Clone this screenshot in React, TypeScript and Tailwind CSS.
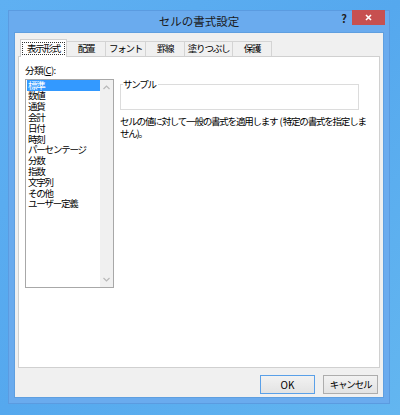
import React from 'react';

const font = { fontFamily: '"Noto Sans CJK JP", "Noto Sans", sans-serif' };

const categories = [
  '標準',
  '数値',
  '通貨',
  '会計',
  '日付',
  '時刻',
  'パーセンテージ',
  '分数',
  '指数',
  '文字列',
  'その他',
  'ユーザー定義',
];

const tabs = ['配置', 'フォント', '罫線', '塗りつぶし', '保護'];
const tabWidths = ['w-[39px]', 'w-[40px]', 'w-[39px]', 'w-[48px]', 'w-[39px]'];

function Chevron({ up }: { up?: boolean }) {
  return (
    <svg width="7" height="5" viewBox="0 0 7 5" className="text-[#b9b9b9]">
      <path
        d={up ? 'M0.5 4 L3.5 1 L6.5 4' : 'M0.5 1 L3.5 4 L6.5 1'}
        fill="none"
        stroke="currentColor"
        strokeWidth="1.2"
      />
    </svg>
  );
}

export default function App() {
  return (
    <div
      className="relative h-[415px] w-[400px] overflow-hidden bg-gradient-to-br from-[#5fb0f2] via-[#55a8ee] to-[#63b6f0]"
      style={font}
    >
      {/* Window */}
      <div className="absolute left-[8px] top-[10px] flex h-[394px] w-[382px] flex-col border border-[#5b9be0] bg-[#6aabee] px-[5px] pb-[5px]">
        {/* Title bar */}
        <div className="relative flex h-[21px] items-center justify-center">
          <span className="text-[11.5px] leading-none text-[#1a1a1a]">セルの書式設定</span>
          <span className="absolute right-[37px] top-[2px] text-[11px] font-bold leading-none text-[#222]">?</span>
          <div className="absolute right-[-1px] top-[-1px] flex h-[15px] w-[33px] items-center justify-center bg-[#c75050]">
            <svg width="7" height="7" viewBox="0 0 7 7">
              <path d="M1 1 L6 6 M6 1 L1 6" stroke="#fff" strokeWidth="1.6" />
            </svg>
          </div>
        </div>

        {/* Client area */}
        <div className="flex flex-1 flex-col border border-[#5f9fe0] bg-[#f0f0f0] px-[3px] pt-[5px]">
          {/* Tabs */}
          <div className="flex h-[18px] items-end pl-[2px]">
            <div className="relative z-10 -mb-px flex h-[18px] w-[47px] items-center justify-center border border-b-0 border-[#d0d0d0] bg-white">
              <div className="flex h-[13px] w-[43px] items-center justify-center whitespace-nowrap border border-dotted border-[#333] text-[9.5px] leading-none tracking-[-1.2px] text-black">
                表示形式
              </div>
            </div>
            {tabs.map((t, i) => (
              <div
                key={t}
                className={`flex h-[15px] ${tabWidths[i]} items-center justify-center whitespace-nowrap border border-l-0 border-b-0 border-[#d4d4d4] bg-[#f0f0f0] text-[9.5px] leading-none tracking-[-1.2px] text-black`}
              >
                {t}
              </div>
            ))}
          </div>

          {/* Panel */}
          <div className="flex h-[312px] w-[362px] border border-[#d0d0d0] bg-white">
            <div className="flex flex-col pl-[6px] pt-[7px]">
              <div className="text-[9.5px] leading-[12px] tracking-[-0.6px] text-black">
                分類(<span className="underline">C</span>):
              </div>
              <div className="mt-[3px] flex h-[209px] w-[89px] border border-[#a8a8a8] bg-white">
                <div className="flex flex-1 flex-col pl-[1px]">
                  {categories.map((c, i) => (
                    <div
                      key={c}
                      className={`flex h-[10.8px] items-center pl-[1px] text-[9.5px] leading-none tracking-[-1.2px] whitespace-nowrap ${
                        i === 0 ? 'bg-[#3399ff] text-white' : 'text-black'
                      }`}
                    >
                      {c}
                    </div>
                  ))}
                </div>
                <div className="flex w-[13px] flex-col items-center justify-between bg-[#f0f0f0] py-[5px]">
                  <Chevron up />
                  <Chevron />
                </div>
              </div>
            </div>

            <div className="flex flex-col pl-[6px] pt-[27px]">
              <div className="relative h-[26px] w-[239px] border border-[#dcdcdc]">
                <span className="absolute left-[2px] top-[-7px] bg-white pr-[2px] text-[9.5px] leading-[12px] tracking-[-1.2px] text-black">
                  サンプル
                </span>
              </div>
              <p className="mt-[5px] w-[247px] text-[9.5px] leading-[12px] tracking-[-1.2px] text-black">
                セルの値に対して一般の書式を適用します<span className="tracking-normal"> (</span>特定の書式を指定しません)。
              </p>
            </div>
          </div>

          {/* Buttons */}
          <div className="flex justify-end gap-[8px] pr-[2px] pt-[7px]">
            <button className="h-[19px] w-[55px] border border-[#5aa0e8] bg-gradient-to-b from-[#f2f2f2] to-[#e3e3e3] text-[10px] leading-none text-black">
              OK
            </button>
            <button className="h-[19px] w-[55px] whitespace-nowrap border border-[#adadad] bg-gradient-to-b from-[#f2f2f2] to-[#e3e3e3] text-[9.5px] leading-none tracking-[-1.2px] text-black">
              キャンセル
            </button>
          </div>
        </div>
      </div>
    </div>
  );
}
